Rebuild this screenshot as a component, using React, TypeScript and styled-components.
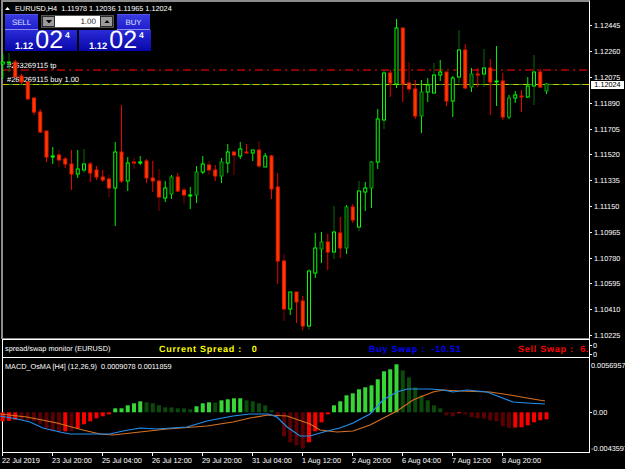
import styled, { createGlobalStyle } from "styled-components";

const UI_FONT = `"Liberation Sans", Arial, sans-serif`;

const GlobalStyle = createGlobalStyle`
  html, body {
    margin: 0;
    background: #000;
  }
  body {
    font-family: ${UI_FONT};
    font-size: 7.3px;
    color: #fff;
    text-rendering: geometricPrecision;
  }
`;

type Kind = "g" | "G" | "D" | "r" | "R";
// body top, body bottom, wick top, wick bottom, style
type Candle = [number, number, number, number, Kind];

const CANDLES: Candle[] = [
  [62, 64, 54, 79, "g"], [62, 63, 53, 72, "G"], [62, 77, 60, 77, "r"], [76, 82, 74, 84, "r"],
  [82, 99, 82, 99, "r"], [98, 112, 98, 115, "r"], [112, 132, 109, 133, "r"], [131, 157, 131, 162, "r"],
  [156, 157, 147, 164, "g"], [155, 160, 150, 167, "R"], [159, 164, 157, 168, "r"], [164, 174, 150, 190, "r"],
  [169, 174, 150, 178, "g"], [164, 170, 149, 173, "G"], [164, 173, 162, 182, "r"], [170, 177, 166, 180, "r"],
  [177, 180, 170, 182, "r"], [179, 188, 175, 197, "R"], [152, 188, 142, 226, "g"], [152, 181, 105, 183, "r"],
  [163, 181, 157, 191, "g"], [162, 163, 158, 169, "R"], [162, 163, 156, 165, "g"], [161, 178, 159, 183, "r"],
  [178, 181, 161, 192, "r"], [181, 197, 169, 211, "R"], [188, 198, 181, 202, "g"], [177, 194, 175, 199, "D"],
  [177, 191, 173, 192, "r"], [190, 195, 187, 204, "R"], [195, 196, 187, 209, "g"], [172, 195, 166, 203, "D"],
  [164, 172, 156, 174, "g"], [165, 170, 161, 175, "R"], [170, 176, 165, 181, "r"], [162, 176, 158, 183, "D"],
  [152, 163, 144, 173, "g"], [152, 155, 152, 175, "R"], [149, 156, 142, 159, "g"], [152, 153, 144, 153, "r"],
  [150, 153, 150, 161, "g"], [150, 166, 141, 168, "R"], [156, 167, 153, 167, "g"], [156, 189, 155, 199, "r"],
  [187, 261, 173, 284, "r"], [261, 309, 254, 321, "R"], [292, 309, 292, 315, "g"], [292, 302, 292, 323, "r"],
  [301, 326, 296, 330, "r"], [271, 326, 269, 330, "G"], [248, 273, 233, 278, "g"], [242, 249, 232, 263, "D"],
  [242, 252, 234, 270, "r"], [232, 252, 206, 259, "G"], [233, 248, 217, 258, "r"], [207, 248, 205, 254, "D"],
  [207, 220, 204, 223, "r"], [191, 227, 181, 231, "G"], [188, 192, 182, 211, "g"], [162, 188, 161, 208, "D"],
  [119, 162, 109, 169, "g"], [73, 120, 70, 129, "G"], [73, 83, 70, 97, "r"], [28, 84, 19, 88, "g"],
  [28, 84, 28, 102, "r"], [83, 89, 62, 93, "R"], [89, 116, 80, 119, "r"], [92, 116, 80, 133, "D"],
  [85, 92, 78, 102, "g"], [75, 93, 63, 93, "G"], [72, 75, 60, 81, "g"], [72, 101, 72, 106, "r"],
  [78, 101, 76, 117, "g"], [50, 77, 30, 83, "G"], [50, 88, 44, 89, "r"], [74, 87, 68, 92, "D"],
  [74, 75, 68, 87, "r"], [68, 74, 49, 87, "G"], [68, 82, 59, 115, "r"], [81, 82, 46, 106, "g"],
  [81, 117, 73, 120, "r"], [98, 117, 95, 119, "D"], [95, 98, 91, 103, "g"], [96, 97, 90, 112, "r"],
  [86, 97, 77, 98, "g"], [72, 86, 55, 105, "G"], [72, 87, 69, 88, "r"], [84, 91, 83, 94, "D"],
];

// OsMA bar height in px from the zero line, same index as the candles.
// bright = bar closer to the previous bar's direction up, dark = falling
const OSMA = [
  -9, -8.5, -7.5, -7.8, -8, -9, -12, -16, -19, -20, -19, -19, -16, -12, -9, -6, -4, -2,
  4, 4, 7, 9, 11, 10, 9, 7, 5, 4.9, 4, 3.9, 3, 6, 9, 10, 9.8, 12, 13, 14, 14, 12, 11, 9, 7, 2,
  -4, -24, -30, -33, -36, -30, -19, -10, -2,
  7, 11, 17, 19, 23, 25, 27, 33, 41, 43, 48, 42, 35, 25, 17, 12, 7, 4,
  -3, -4, -1, -2, -5, -6, -6.2, -8, -9, -14, -15.5, -15.2, -15, -13, -10, -8, -7,
];

const MACD_LINE =
  "0,416 17,419 30,422 43,428 60,432 70,434 110,434 123,431 140,428 157,429 187,427 207,421 233,416 250,414 268,414 277,417 287,427 300,436 310,436 327,431 340,428 353,423 370,414 383,400 397,392 407,389 430,389 443,390 453,392 467,390 487,392 500,397 513,402 527,403 545,404";
const SIGNAL_LINE =
  "0,414 27,417 57,423 83,430 100,434 113,435 140,432 167,429 207,426 233,422 250,418 268,415 287,416 310,424 320,430 337,432 353,431 370,425 397,411 413,400 433,392 443,390 460,391 490,392 510,395 527,398 545,401";

const PRICES = ["1.12445", "1.12260", "1.12075", "1.11890", "1.11705", "1.11520", "1.11335", "1.11150", "1.10965", "1.10780", "1.10595", "1.10410", "1.10225"];
const TIMES = ["22 Jul 2019", "23 Jul 20:00", "25 Jul 04:00", "26 Jul 12:00", "29 Jul 20:00", "31 Jul 04:00", "1 Aug 12:00", "2 Aug 20:00", "6 Aug 04:00", "7 Aug 12:00", "8 Aug 20:00"];

const barX = (i: number) => 2.75 + 6.25 * i;

const Terminal = styled.div`
  display: grid;
  grid-template-columns: 590px 35px;
  grid-template-rows: 339px 19px 95px 16px;
  width: 625px;
  height: 469px;
  overflow: hidden;
  background: #000;
`;

const MainPane = styled.div`
  position: relative;
  margin-left: 1px;
  border-top: 2px solid #8c8c8c;
  border-left: 2px solid #8c8c8c;
  border-bottom: 1px solid #8c8c8c;
  border-right: 1px solid #fff;
`;

const ChartSvg = styled.svg`
  position: relative;
  z-index: 1;
  display: block;
  overflow: visible;
`;

const ChartTitle = styled.div`
  position: absolute;
  z-index: 2;
  left: 2px;
  top: 2px;
  display: flex;
  align-items: center;
  gap: 5px;
  height: 9px;
  white-space: pre;
`;

const OrderLabel = styled.div<{ $top: number }>`
  position: absolute;
  left: 4px;
  top: ${(p) => p.$top}px;
  font-size: 7.5px;
  line-height: 9px;
  white-space: nowrap;
`;

const TradePanel = styled.div`
  position: absolute;
  z-index: 3;
  left: 2px;
  top: 12px;
  display: grid;
  grid-template-columns: 72px 72px;
  grid-template-rows: 16px 21px;
  column-gap: 2px;
`;

const OrderRow = styled.div`
  grid-column: 1 / 3;
  display: flex;
  align-items: flex-start;
`;

const OrderButton = styled.div`
  width: 33px;
  height: 16px;
  box-sizing: border-box;
  padding-top: 3px;
  text-align: center;
  font-size: 7.8px;
  line-height: 9px;
  color: #dfe4ff;
  background: linear-gradient(#3a3ae0, #1f1fcf);
  border-top: 1px solid #5252e8;
  border-bottom: 1px solid #8a8ae8;
`;

const Spinner = styled.div`
  display: flex;
  width: 73px;
  height: 13px;
  margin: 1px 3px 0;
  background: #000;
  border: 1px solid #555;
  box-sizing: border-box;
`;

const SpinButton = styled.div`
  display: flex;
  align-items: center;
  justify-content: center;
  width: 13px;
  background: #9a9a9a;
  border: 1px solid #2a2a2a;
  box-sizing: border-box;
`;

const LotInput = styled.div`
  flex: 1;
  padding-right: 4px;
  text-align: right;
  font-size: 8px;
  line-height: 11px;
  color: #222;
  background: #fff;
`;

const PriceTile = styled.div`
  display: flex;
  align-items: flex-end;
  height: 21px;
  padding: 0 0 1px 10px;
  box-sizing: border-box;
  color: #fff;
  background: linear-gradient(#2a2ad8, #0707a8);
`;

const PriceHead = styled.span`
  font-size: 9.4px;
  font-weight: bold;
  line-height: 9px;
  margin-right: 2px;
`;

const PriceBig = styled.span`
  font-size: 25px;
  line-height: 19px;
`;

const PricePip = styled.span`
  align-self: flex-start;
  margin: 1px 0 0 2px;
  font-size: 8.5px;
  font-weight: bold;
  line-height: 9px;
`;

const PriceAxis = styled.div`
  position: relative;
  display: flex;
  flex-direction: column;
  padding-top: 13px;
  overflow: hidden;
`;

const AxisRow = styled.div`
  display: flex;
  align-items: center;
  flex: 0 0 25.8px;
  gap: 2px;
  &::before {
    content: "";
    width: 2px;
    height: 1px;
    background: #fff;
  }
`;

const PriceTag = styled.div`
  position: absolute;
  left: 1px;
  top: 81px;
  width: 33px;
  height: 8px;
  text-align: center;
  line-height: 8px;
  color: #000;
  background: #fff;
`;

const SpreadPane = styled.div`
  display: grid;
  grid-template-columns: 154px 210px 149px 1fr;
  align-items: center;
  margin-left: 2px;
  padding-left: 2px;
  border: 1px solid #fff;
  overflow: hidden;
  white-space: pre;
`;

const Stat = styled.div<{ $color: string }>`
  font-size: 9px;
  font-weight: bold;
  letter-spacing: 0.75px;
  color: ${(p) => p.$color};
`;

const SpreadAxis = styled.div`
  display: flex;
  flex-direction: column;
  padding-top: 2px;
`;

const SmallAxisRow = styled(AxisRow)`
  flex-basis: 7px;
  gap: 1px;
`;

const MacdPane = styled.div`
  position: relative;
  margin-left: 2px;
  border: 1px solid #fff;
  border-top: none;
`;

const PaneLabel = styled.div`
  position: absolute;
  z-index: 1;
  left: 2px;
  top: 4px;
  line-height: 9px;
  white-space: pre;
`;

const MacdAxis = styled.div`
  display: flex;
  flex-direction: column;
  overflow: hidden;
  white-space: nowrap;
`;

const MacdAxisRow = styled(AxisRow)<{ $gap: number }>`
  flex-basis: 9px;
  gap: 1px;
  margin-top: ${(p) => p.$gap}px;
`;

const TimeAxis = styled.div`
  grid-column: 1 / 3;
  display: flex;
  padding-left: 2px;
`;

const TimeCell = styled.div`
  flex: 0 0 50px;
  box-sizing: border-box;
  padding-top: 3px;
  line-height: 9px;
  white-space: nowrap;
  background: linear-gradient(#fff, #fff) no-repeat left top / 1px 3px;
`;

const Triangle = ({ up, size, color }: { up: boolean; size: number; color: string }) => (
  <svg width={size} height={size * 0.6} viewBox="0 0 10 6">
    <path d={up ? "M5 0L10 6H0Z" : "M0 0H10L5 6Z"} fill={color} />
  </svg>
);

const CandleMark = ({ candle, index }: { candle: Candle; index: number }) => {
  const [top, bottom, wickTop, wickBottom, kind] = candle;
  const x = barX(index);
  const up = kind === "g" || kind === "G" || kind === "D";
  const wickBright = up ? "#00f000" : "#f00000";
  const wickDark = up ? "#0a6a0a" : "#860000";
  const wick = kind === "G" || kind === "R" ? wickDark : wickBright;
  if (up) {
    return (
      <g>
        <line x1={x} x2={x} y1={wickTop} y2={wickBottom} stroke={wick} strokeWidth={1} />
        <rect x={x - 1.5} y={top} width={3} height={bottom - top} fill={kind === "D" ? "#002a00" : "#000"} stroke={kind === "D" ? "#0aa00a" : "#00ff00"} strokeWidth={1} />
      </g>
    );
  }
  return (
    <g>
      <line x1={x} x2={x} y1={wickTop} y2={wickBottom} stroke={wick} strokeWidth={1} />
      <rect x={x - 1.5} y={top} width={3} height={Math.max(bottom - top, 1)} fill="#ff3a00" stroke="#e81800" strokeWidth={1} />
    </g>
  );
};

const PriceChart = () => (
  <ChartSvg width={586} height={336} viewBox="3 2 586 336">
    <line x1={3} x2={589} y1={70} y2={70} stroke="#8b0000" strokeWidth={1.8} strokeDasharray="8 4 2 4" />
    <line x1={3} x2={589} y1={84.5} y2={84.5} stroke="#1f9a1f" strokeWidth={1} />
    <line x1={3} x2={589} y1={84.5} y2={84.5} stroke="#c8c400" strokeWidth={1} strokeDasharray="6 4" />
    {CANDLES.map((candle, i) => (
      <CandleMark key={i} candle={candle} index={i} />
    ))}
  </ChartSvg>
);

const OsmaChart = () => {
  const zero = 412.3;
  return (
    <ChartSvg width={586} height={94} viewBox="3 358 586 94">
      {OSMA.map((h, i) => {
        const prev = i === 0 ? h - 1 : OSMA[i - 1];
        const rising = h > 0 ? h >= prev : h > prev;
        const fill = h > 0 ? (rising ? "#36d636" : "#0b4a0b") : rising ? "#fc0000" : "#5a0000";
        return <rect key={i} x={barX(i) - 2} y={h > 0 ? zero - h : zero} width={4} height={Math.abs(h)} fill={fill} />;
      })}
      <polyline points={SIGNAL_LINE} fill="none" stroke="#d8701e" strokeWidth={1.2} />
      <polyline points={MACD_LINE} fill="none" stroke="#2290f0" strokeWidth={1.2} />
    </ChartSvg>
  );
};

const App = () => (
  <>
    <GlobalStyle />
    <Terminal>
      <MainPane>
        <OrderLabel $top={59}>#263269115 tp</OrderLabel>
        <OrderLabel $top={73}>#263269115 buy 1.00</OrderLabel>
        <PriceChart />
        <ChartTitle>
          <Triangle up size={5} color="#fff" />
          <span>EURUSD,H4  1.11978 1.12036 1.11965 1.12024</span>
        </ChartTitle>
        <TradePanel>
          <OrderRow>
            <OrderButton>SELL</OrderButton>
            <Spinner>
              <SpinButton><Triangle up={false} size={6} color="#000" /></SpinButton>
              <LotInput>1.00</LotInput>
              <SpinButton><Triangle up size={6} color="#000" /></SpinButton>
            </Spinner>
            <OrderButton>BUY</OrderButton>
          </OrderRow>
          <PriceTile>
            <PriceHead>1.12</PriceHead>
            <PriceBig>02</PriceBig>
            <PricePip>4</PricePip>
          </PriceTile>
          <PriceTile>
            <PriceHead>1.12</PriceHead>
            <PriceBig>02</PriceBig>
            <PricePip>4</PricePip>
          </PriceTile>
        </TradePanel>
      </MainPane>
      <PriceAxis>
        {PRICES.map((p) => (
          <AxisRow key={p}>{p}</AxisRow>
        ))}
        <PriceTag>1.12024</PriceTag>
      </PriceAxis>
      <SpreadPane>
        <div>spread/swap monitor (EURUSD)</div>
        <Stat $color="#ffff00">Current Spread :   0</Stat>
        <Stat $color="#0000ff">Buy Swap :  -10.51</Stat>
        <Stat $color="#ff0000">Sell Swap :  6.</Stat>
      </SpreadPane>
      <SpreadAxis>
        <SmallAxisRow>0</SmallAxisRow>
        <SmallAxisRow>0</SmallAxisRow>
      </SpreadAxis>
      <MacdPane>
        <PaneLabel>MACD_OsMA [H4] (12,26,9)  0.0009078 0.0011859</PaneLabel>
        <OsmaChart />
      </MacdPane>
      <MacdAxis>
        <MacdAxisRow $gap={3}>0.0056957</MacdAxisRow>
        <MacdAxisRow $gap={38}>0.00</MacdAxisRow>
        <MacdAxisRow $gap={27}>-0.0043597</MacdAxisRow>
      </MacdAxis>
      <TimeAxis>
        {TIMES.map((t) => (
          <TimeCell key={t}>{t}</TimeCell>
        ))}
      </TimeAxis>
    </Terminal>
  </>
);

export default App;
